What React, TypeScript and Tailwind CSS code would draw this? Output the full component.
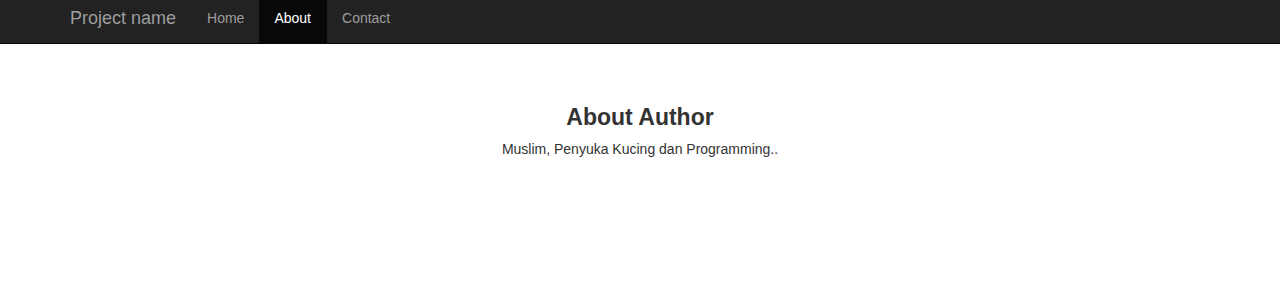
export default function App() {
  return (
    <div className="min-h-[305px] bg-white font-['Liberation_Sans',Arial,sans-serif] text-[#333]">
      {/* Navbar */}
      <nav className="h-[44px] bg-[#222] border-b border-[#080808]">
        <div className="flex h-[43px] pl-[55px]">
          <a className="pl-[15px] pr-[16px] pt-[8px] text-[18px] leading-[20px] text-[#9d9d9d]">Project name</a>
          <ul className="flex">
            <li>
              <a className="block h-[43px] px-[15px] pt-[8px] text-[14px] leading-[20px] text-[#9d9d9d]">Home</a>
            </li>
            <li>
              <a className="block h-[43px] pl-[15px] pr-[16px] pt-[8px] text-[14px] leading-[20px] text-white bg-[#080808]">About</a>
            </li>
            <li>
              <a className="block h-[43px] px-[15px] pt-[8px] text-[14px] leading-[20px] text-[#9d9d9d]">Contact</a>
            </li>
          </ul>
        </div>
      </nav>

      {/* Content */}
      <div className="flex flex-col items-center pt-[60px]">
        <h3 className="text-[23px] font-bold leading-[26px] text-[#333]">About Author</h3>
        <p className="mt-[9px] text-[14px] leading-[20px] text-[#333]">Muslim, Penyuka Kucing dan Programming..</p>
      </div>
    </div>
  );
}
